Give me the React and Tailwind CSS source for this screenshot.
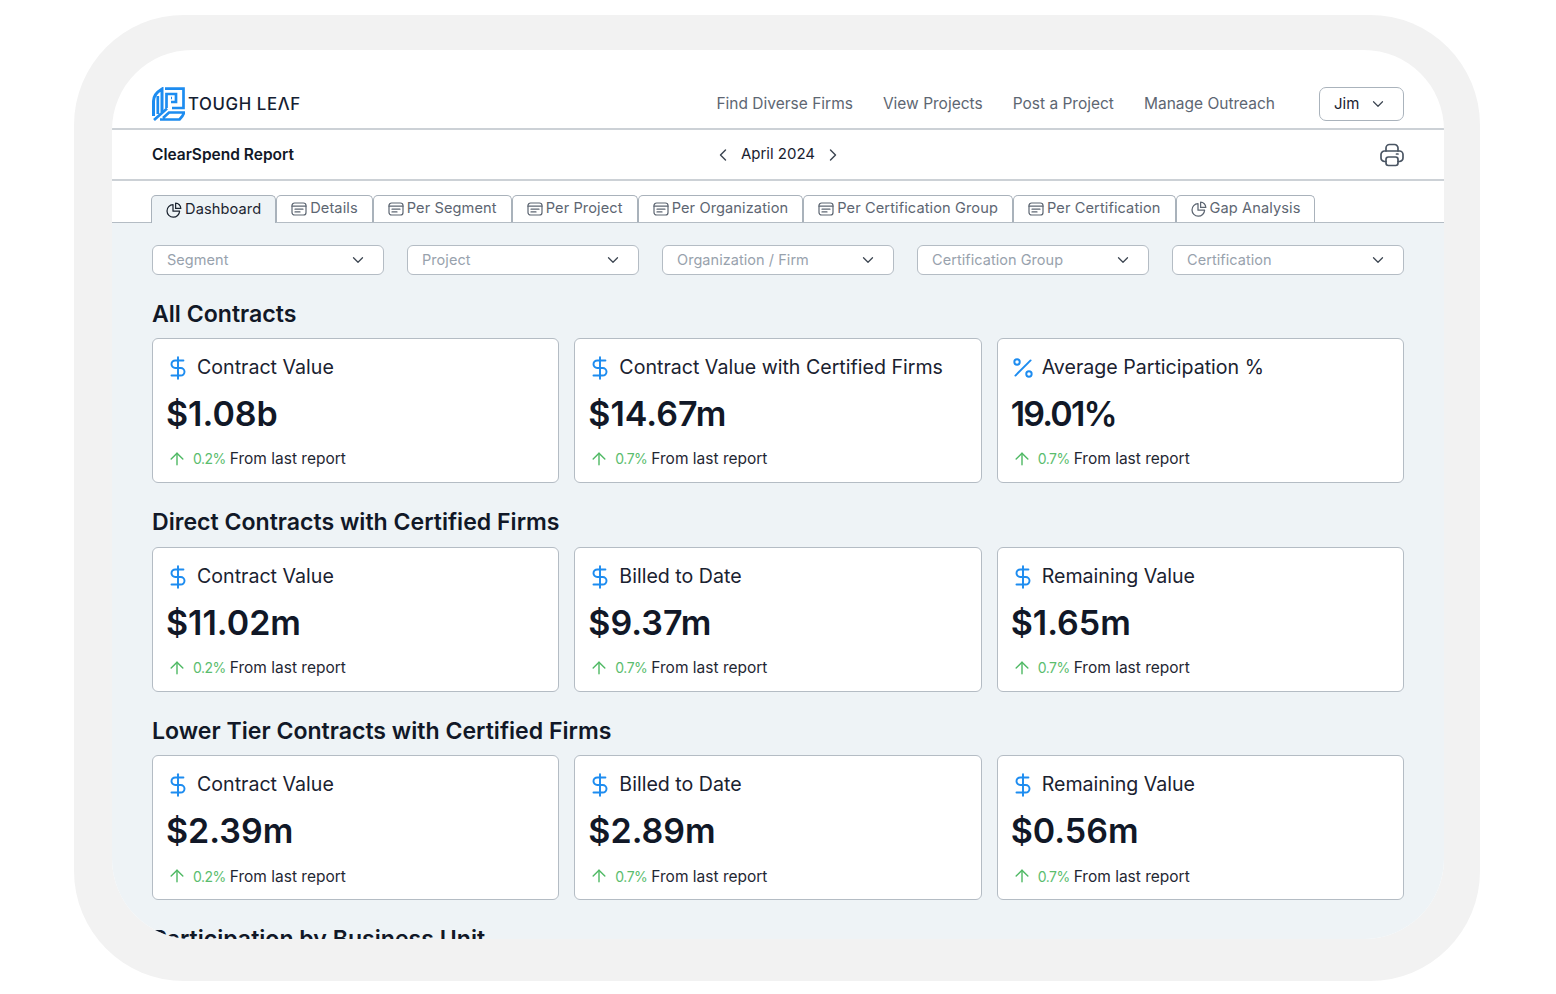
import React from 'react';
import { ArrowUp, ChevronDown, ChevronLeft, ChevronRight, DollarSign, Percent } from 'lucide-react';

const NAV = ['Find Diverse Firms', 'View Projects', 'Post a Project', 'Manage Outreach'];

const TABS = [
  { label: 'Dashboard', icon: 'pie', active: true },
  { label: 'Details', icon: 'doc' },
  { label: 'Per Segment', icon: 'doc' },
  { label: 'Per Project', icon: 'doc' },
  { label: 'Per Organization', icon: 'doc' },
  { label: 'Per Certification Group', icon: 'doc' },
  { label: 'Per Certification', icon: 'doc' },
  { label: 'Gap Analysis', icon: 'pie' },
];

const FILTERS = ['Segment', 'Project', 'Organization / Firm', 'Certification Group', 'Certification'];

const SECTIONS = [
  {
    title: 'All Contracts',
    cards: [
      { label: 'Contract Value', value: '$1.08b', delta: '0.2%' },
      { label: 'Contract Value with Certified Firms', value: '$14.67m', delta: '0.7%' },
      { label: 'Average Participation %', value: '19.01%', delta: '0.7%', percent: true },
    ],
  },
  {
    title: 'Direct Contracts with Certified Firms',
    cards: [
      { label: 'Contract Value', value: '$11.02m', delta: '0.2%' },
      { label: 'Billed to Date', value: '$9.37m', delta: '0.7%' },
      { label: 'Remaining Value', value: '$1.65m', delta: '0.7%' },
    ],
  },
  {
    title: 'Lower Tier Contracts with Certified Firms',
    cards: [
      { label: 'Contract Value', value: '$2.39m', delta: '0.2%' },
      { label: 'Billed to Date', value: '$2.89m', delta: '0.7%' },
      { label: 'Remaining Value', value: '$0.56m', delta: '0.7%' },
    ],
  },
];

function Logo() {
  return (
    <svg width="33" height="34" viewBox="0 0 33 34" fill="none" stroke="#1d8cf0" strokeWidth="2.7">
      <path d="M1.5 29V14C1.5 9 5 5 10 2V25" strokeWidth="3" />
      <path d="M5.8 27V9" />
      <path d="M14.5 21V7H24V15H19" />
      <path d="M13 1.7H31.5V21H20" />
      <path d="M19 11H20" />
      <path d="M2 33L15 21.5" />
      <path d="M8 32.5H27.5C30 30 31.5 28 32 25.5H17L11 31" />
    </svg>
  );
}

function DocIcon({ className }) {
  return (
    <svg viewBox="0 0 16 16" fill="none" stroke="currentColor" strokeWidth="1.2" strokeLinecap="round" className={className}>
      <rect x="1" y="2" width="14" height="12" rx="2.6" />
      <path d="M1 5.2h14M4 8.2h8M4 10.9h5" />
    </svg>
  );
}

function PieIcon({ className }) {
  return (
    <svg viewBox="0 0 16 16" fill="none" stroke="currentColor" strokeWidth="1.25" strokeLinejoin="round" className={className}>
      <path d="M7 2.6A6.3 6.3 0 1 0 13.6 9.2H7V2.6Z" />
      <path d="M9.6 1.2A5.2 5.2 0 0 1 14.8 6.4H9.6V1.2Z" />
    </svg>
  );
}

function PrinterIcon({ className }) {
  return (
    <svg viewBox="0 0 24 24" fill="none" stroke="currentColor" strokeWidth="1.7" strokeLinecap="round" className={className}>
      <path d="M6 8V5a3.5 3.5 0 0 1 3.5-3.5h5A3.5 3.5 0 0 1 18 5v3" />
      <path d="M6 18.5H4.5A3.5 3.5 0 0 1 1 15v-3.5A3.5 3.5 0 0 1 4.5 8h15a3.5 3.5 0 0 1 3.5 3.5V15a3.5 3.5 0 0 1-3.5 3.5H18" />
      <rect x="6" y="14" width="12" height="8.5" rx="2.4" />
      <path d="M16.5 11h1.5" />
    </svg>
  );
}

function Tab({ tab }) {
  return (
    <div
      className={`flex items-center gap-[3px] rounded-t-[5px] border border-[#a9b2bb] px-[14px] text-[14.6px] tracking-[0.1px] ${
        tab.active
          ? '-mb-px h-[28px] border-b-0 bg-[#eef3f6] text-[#1c2430]'
          : 'h-[27px] border-b-0 bg-white text-[#5d6672]'
      }`}
    >
      {tab.icon === 'pie' ? <PieIcon className="h-[16px] w-[16px]" /> : <DocIcon className="h-[16px] w-[16px]" />}
      <span>{tab.label}</span>
    </div>
  );
}

function Filter({ label }) {
  return (
    <div className="flex h-[30px] items-center justify-between rounded-[6px] border border-[#b4bcc4] bg-white pl-[14px] pr-[16px] text-[14.5px] tracking-[0.05px] text-[#98a2ad]">
      <span>{label}</span>
      <ChevronDown className="h-[18px] w-[18px] text-[#3d4652]" strokeWidth={1.7} />
    </div>
  );
}

function StatCard({ card }) {
  const Icon = card.percent ? Percent : DollarSign;
  return (
    <div className="h-[145px] rounded-[6px] border border-[#b4bcc4] bg-white pl-[13px] pt-[14px]">
      <div className="flex h-[30px] items-center gap-[6px]">
        <Icon className="-ml-px h-[26px] w-[26px] text-[#1d8cf0]" strokeWidth={1.8} />
        <span className="text-[19.6px] text-[#1a2230]">{card.label}</span>
      </div>
      <div className={`mt-[8px] h-[46px] text-[34px] leading-[46px] font-semibold text-[#111827] ${card.percent ? 'tracking-[-1.8px]' : ''}`}>
        {card.value}
      </div>
      <div className="mt-[9px] flex h-[26px] items-center text-[15.5px] text-[#1f2733]">
        <ArrowUp className="mr-[6px] ml-[1px] h-[20px] w-[20px] text-[#4fb964]" strokeWidth={1.7} />
        <span className="text-[14px] tracking-[-0.5px] text-[#5bbd6e]">{card.delta}</span>
        <span className="ml-[4px]">From last report</span>
      </div>
    </div>
  );
}

function Section({ section }) {
  return (
    <section className="mb-[20.2px]">
      <h2 className="mb-[5.4px] h-[38px] text-[23.1px] leading-[38px] font-semibold text-[#111827]">{section.title}</h2>
      <div className="grid grid-cols-3 gap-[15px]">
        {section.cards.map((c) => (
          <StatCard key={c.label + c.value} card={c} />
        ))}
      </div>
    </section>
  );
}

export default function App() {
  return (
    <div className="h-[994px] w-[1556px] overflow-hidden bg-white pt-[15px] pl-[74px] font-['Inter',sans-serif]">
      <div className="h-[966px] w-[1406px] rounded-[110px] bg-[#f2f2f2] pt-[35px] pl-[38px]">
        <div className="h-[889px] w-[1332px] overflow-hidden rounded-[80px] bg-white">
          <header className="flex h-[80px] items-end border-b-2 border-[#ccd1d6] px-[40px] pb-[7px]">
            <div className="flex flex-1 items-center gap-[3px] self-end">
              <Logo />
              <span className="mt-[1px] text-[16.8px] font-medium tracking-[0.6px] text-[#142032]">TOUGH LEΛF</span>
            </div>
            <nav className="flex items-center gap-[30px] pb-[6px] text-[15.5px] text-[#5d6672]">
              {NAV.map((n) => (
                <span key={n}>{n}</span>
              ))}
            </nav>
            <div className="ml-[44px] flex h-[34px] w-[85px] items-center gap-[10px] rounded-[7px] border border-[#aab3bc] pl-[14px] text-[15px] text-[#1a2230]">
              Jim
              <ChevronDown className="h-[18px] w-[18px] text-[#3d4652]" strokeWidth={1.6} />
            </div>
          </header>

          <div className="grid h-[51px] grid-cols-3 items-center border-b-2 border-[#ccd1d6] px-[40px]">
            <span className="pt-px text-[15.5px] font-semibold text-[#111827]">ClearSpend Report</span>
            <div className="flex items-center justify-center gap-[5px] text-[15px] text-[#1a2230]">
              <ChevronLeft className="h-[20px] w-[20px] text-[#3d4652]" strokeWidth={1.7} />
              <span className="w-[80px] text-center">April 2024</span>
              <ChevronRight className="h-[20px] w-[20px] text-[#3d4652]" strokeWidth={1.7} />
            </div>
            <PrinterIcon className="h-[24px] w-[24px] justify-self-end text-[#4a5563]" />
          </div>

          <div className="flex h-[42px] items-end border-b border-[#b4bcc4] pl-[39px]">
            {TABS.map((t) => (
              <Tab key={t.label} tab={t} />
            ))}
          </div>

          <main className="h-[720px] bg-[#eef3f6] px-[40px] pt-[22px]">
            <div className="grid grid-cols-5 gap-[23px]">
              {FILTERS.map((f) => (
                <Filter key={f} label={f} />
              ))}
            </div>
            <div className="mt-[19.6px]">
              {SECTIONS.map((s) => (
                <Section key={s.title} section={s} />
              ))}
              <h2 className="h-[38px] text-[23.1px] leading-[38px] font-semibold text-[#111827]">Participation by Business Unit</h2>
            </div>
          </main>
        </div>
      </div>
    </div>
  );
}
